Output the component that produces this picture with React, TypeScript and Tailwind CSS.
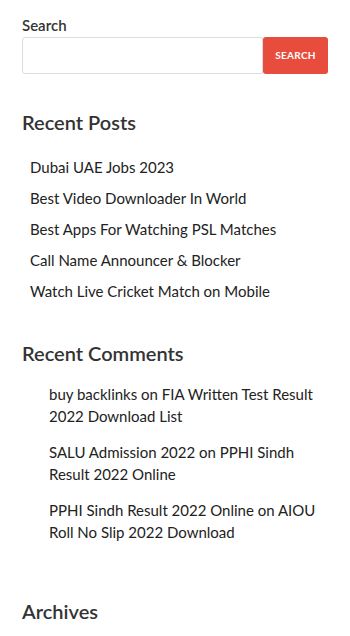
const posts = [
  "Dubai UAE Jobs 2023",
  "Best Video Downloader In World",
  "Best Apps For Watching PSL Matches",
  "Call Name Announcer & Blocker",
  "Watch Live Cricket Match on Mobile",
];

const comments = [
  { author: "buy backlinks", post: "FIA Written Test Result 2022 Download List" },
  { author: "SALU Admission 2022", post: "PPHI Sindh Result 2022 Online" },
  { author: "PPHI Sindh Result 2022 Online", post: "AIOU Roll No Slip 2022 Download" },
];

export default function App() {
  return (
    <div
      className="min-h-[636px] bg-white px-[22px] pt-[15px] text-[#333]"
      style={{ fontFamily: "Lato, 'Open Sans', sans-serif" }}
    >
      {/* search widget */}
      <label className="block text-[15px] leading-[20px] font-semibold text-[#333]">
        Search
      </label>
      <div className="mt-[2px] flex h-[37px]">
        <input
          type="text"
          className="h-full flex-1 min-w-0 rounded-l-[3px] border border-[#ddd] bg-white px-2 outline-none"
        />
        <button className="h-full w-[65px] rounded-[3px] bg-[#e74c3c] text-[10px] font-bold uppercase tracking-[0.03em] text-white">
          Search
        </button>
      </div>

      {/* recent posts */}
      <h2 className="mt-[34px] text-[20px] leading-[28px] font-semibold text-[#333]">
        Recent Posts
      </h2>
      <ul className="mt-[16px] pl-[8px]">
        {posts.map((p) => (
          <li key={p} className="text-[15px] leading-[31px] text-[#222]">
            {p}
          </li>
        ))}
      </ul>

      {/* recent comments */}
      <h2 className="mt-[32px] text-[20px] leading-[28px] font-semibold text-[#333]">
        Recent Comments
      </h2>
      <ul className="mt-[16px] flex flex-col gap-[14px] pl-[27px]">
        {comments.map((c) => (
          <li key={c.author} className="text-[15px] leading-[22px] text-[#222]">
            {`${c.author} on ${c.post}`}
          </li>
        ))}
      </ul>

      {/* archives */}
      <h2 className="mt-[54px] text-[20px] leading-[28px] font-semibold text-[#333]">
        Archives
      </h2>
    </div>
  );
}
